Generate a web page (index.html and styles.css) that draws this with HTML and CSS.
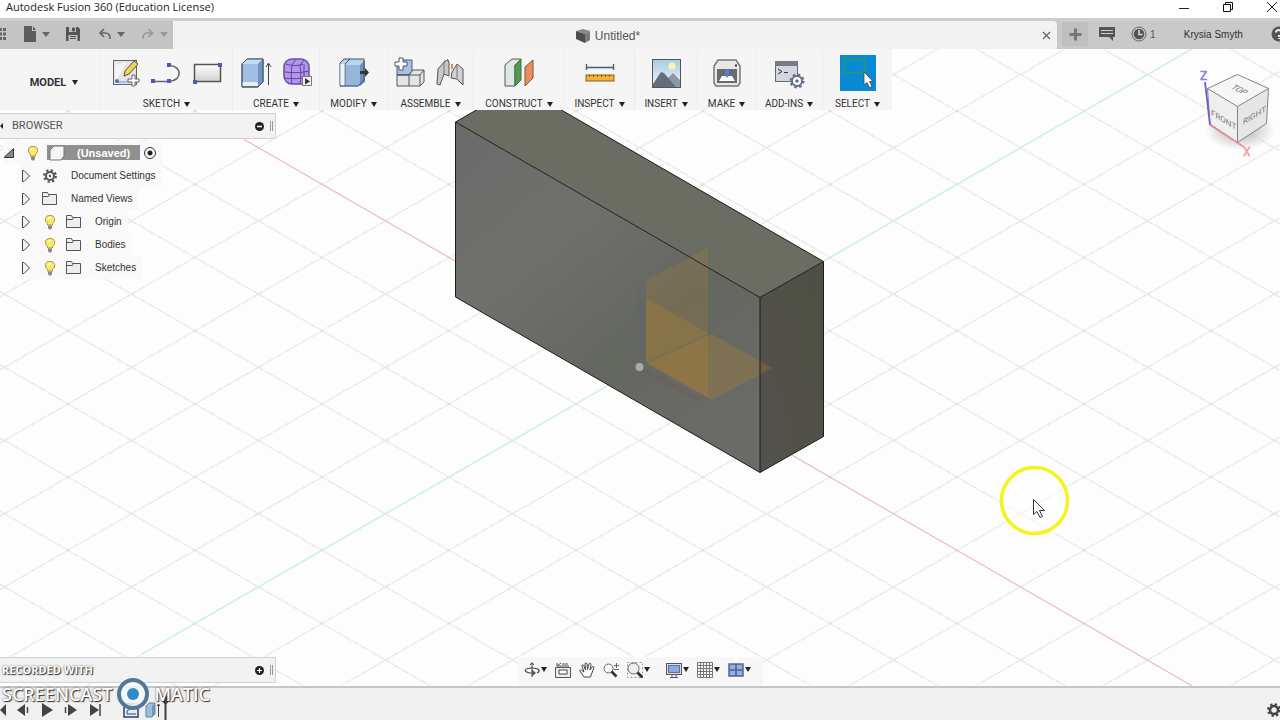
FILE: index.html
```html
<!DOCTYPE html>
<html lang="en">
<head>
<meta charset="utf-8">
<title>Autodesk Fusion 360 (Education License)</title>
<link rel="stylesheet" href="styles.css">
</head>
<body>
<header class="titlebar">
  <h1 class="app-title">Autodesk Fusion 360 (Education License)</h1>
  <div class="window-controls">
    <button class="plain" aria-label="Minimize"><svg width="12" height="12"><path d="M1 7.500h10" stroke="#222" fill="none"/></svg></button>
    <button class="plain" aria-label="Restore"><svg width="12" height="12"><path d="M1.500 3.500h7v7h-7zM3.500 3.500v-2h7v7h-2" stroke="#111" fill="none"/></svg></button>
    <button class="plain" aria-label="Close"><svg width="12" height="12"><path d="M1 1l10 10M11 1L1 11" stroke="#222" fill="none"/></svg></button>
  </div>
</header>

<div class="tabbar">
  <div class="quick">
    <button class="plain" aria-label="Data panel"><svg width="7" height="14" fill="#666"><path d="M0 1h2v3H0zM3 1h3v3H3zM0 5.500h2v3H0zM3 5.500h3v3H3zM0 10h2v3H0zM3 10h3v3H3z"/></svg></button>
    <button class="plain pair" aria-label="File"><svg width="14" height="16" fill="#5c5c5c"><path d="M1 0h8v5h4v11H1zM10 0l3 4h-3z"/></svg><span class="caret soft"></span></button>
    <button class="plain" aria-label="Save"><svg width="14" height="14"><path d="M0 0h12l2 2v12H0z" fill="#555"/><path d="M3 0h7v5H3zM2.500 8h9v6h-9z" fill="#c4c4c4"/><path d="M6.500 1h2v3h-2zM4 9.500h6M4 11.500h6" stroke="#555" fill="#555"/></svg></button>
    <button class="plain pair" aria-label="Undo"><svg width="16" height="14"><path d="M8 2L4 6l4 4M4.500 6H9c4 0 5.500 2.500 5 6" stroke="#666" stroke-width="1.700" fill="none"/></svg><span class="caret soft"></span></button>
    <button class="plain pair" aria-label="Redo"><svg width="14" height="14"><path d="M7.500 2l4 4-4 4M11 6H7c-4 0-5.500 2.500-5 6" stroke="#999" stroke-width="1.700" fill="none"/></svg><span class="caret faint"></span></button>
  </div>
  <div class="tab">
    <div class="tab-title">
      <svg width="16" height="16"><path d="M1 3l7-2 7 2-5 3z" fill="#888"/><path d="M1 3l9 3v9l-9-4z" fill="#4d4d4d"/><path d="M10 6l5-3v9l-5 3z" fill="#7a7a7a"/></svg>
      <span>Untitled*</span>
    </div>
    <button class="plain" aria-label="Close tab"><svg width="9" height="9"><path d="M1 1l7 7M8 1L1 8" stroke="#666" stroke-width="1.300"/></svg></button>
  </div>
  <div class="account">
    <button class="new-tab" aria-label="New tab"><svg width="13" height="13"><path d="M6.500 0.500v12M0.500 6.500h12" stroke="#777" stroke-width="3"/></svg></button>
    <button class="plain" aria-label="Comments"><svg width="16" height="14"><path d="M0 0h16v10h-2v4l-4-4H0z" fill="#555"/><path d="M2 3.500h12M2 6.500h12" stroke="#ccc"/></svg></button>
    <button class="plain jobs" aria-label="Job status, 1"><svg width="16" height="16"><circle cx="8" cy="8" r="7" fill="none" stroke="#666"/><circle cx="8" cy="8" r="5.300" fill="#555"/><path d="M8 4v4.500h3.500" stroke="#ddd" stroke-width="1.500" fill="none"/></svg><span>1</span></button>
    <button class="plain user">Krysia Smyth</button>
    <button class="plain help" aria-label="Help"><svg width="9" height="16"><circle cx="8" cy="8" r="7.500" fill="#555"/><path d="M5 6.500c0-3 4-3 5-1" stroke="#eee" stroke-width="2" fill="none"/><path d="M8 9v2M8 12v1" stroke="#eee" stroke-width="2"/></svg></button>
  </div>
</div>

<main class="viewport">
  <svg class="scene" viewBox="0 49 1280 637" preserveAspectRatio="xMidYMid slice" role="img" aria-label="Model of a rectangular block on a grid">
    <defs>
      <pattern id="grid" x="639.5" y="367.3" width="127" height="73.2" patternUnits="userSpaceOnUse">
        <path d="M0 0L127 73.200M0 73.200L127 0" stroke="#cfcfcf" stroke-width="0.8" stroke-dasharray="6 1 2 1" fill="none"/>
      </pattern>
      <linearGradient id="front" x1="0" y1="0" x2="0.7" y2="1">
        <stop offset="0" stop-color="#696a6b"/><stop offset="0.35" stop-color="#70716c"/><stop offset="0.7" stop-color="#646660"/><stop offset="1" stop-color="#6a6b66"/>
      </linearGradient>
      <linearGradient id="side" x1="1" y1="0" x2="0" y2="1">
        <stop offset="0" stop-color="#4e4f44"/><stop offset="1" stop-color="#53524c"/>
      </linearGradient>
    </defs>
    <rect x="-600" y="-400" width="2500" height="1500" fill="#fdfdfd"/>
    <rect x="-600" y="-400" width="2500" height="1500" fill="url(#grid)"/>
    <path d="M142 654L1192 49" stroke="#c6f5da" stroke-width="1.200"/>
    <path d="M244 139.300L1192 685.800" stroke="#f5afb7" stroke-width="1"/>
    <path d="M455.500 122L519 85.500 823.500 261.500 760 297.500z" fill="#6c6d62"/>
    <path d="M455.500 122L760 297.500V472.500L455.500 297z" fill="url(#front)"/>
    <path d="M760 297.500L823.500 261.500V436.500L760 472.500z" fill="url(#side)"/>
    <g fill="#b8862a">
      <path d="M646 280L708 248V333L646 362z" opacity="0.2"/>
      <path d="M646 298L708 333V397L646 362z" opacity="0.28"/>
      <path d="M646 364L712 334 772 368 712 400z" opacity="0.28"/>
    </g>
    <path d="M640 288V360" stroke="#5c5f86" stroke-width="4" opacity="0.200"/>
    <path d="M644 370L700 400" stroke="#76424f" stroke-width="4" opacity="0.150"/>
    <circle cx="639.500" cy="367" r="4" fill="#aaaca8"/>
    <path d="M519 85.500L823.500 261.500V436.500L760 472.500 455.500 297V122zM455.500 122L760 297.500 823.500 261.500M760 297.500V472.500" fill="none" stroke="#1c1c1a" stroke-width="1"/>
    <circle cx="1034.500" cy="500.500" r="33" fill="#fff" fill-opacity="0.500" stroke="#f7f21c" stroke-width="3.500"/>
    <path d="M1033.500 499.500v15l3.500-3 3 6 2.500-1-3-6h5z" fill="#fff" stroke="#333"/>
  </svg>

  <svg class="viewcube" viewBox="1190 65 90 100" width="90" height="100" role="img" aria-label="View cube">
    <defs><radialGradient id="cubeshade"><stop offset="0.400" stop-color="#bbb" stop-opacity="0.700"/><stop offset="1" stop-color="#bbb" stop-opacity="0"/></radialGradient></defs>
    <ellipse cx="1240" cy="130" rx="35" ry="20" fill="url(#cubeshade)"/>
    <path d="M1237.500 74.500L1268.500 88.500 1237.500 106.500 1207.500 88.500z" fill="#f6f6f6"/>
    <path d="M1207.500 88.500L1237.500 106.500V142.500L1210 124z" fill="#efefef"/>
    <path d="M1268.500 88.500L1237.500 106.500V142.500L1266.500 123.500z" fill="#e6e6e6"/>
    <path d="M1237.500 74.500L1268.500 88.500 1237.500 106.500 1207.500 88.500zM1207.500 88.500L1210 124 1237.500 142.500 1266.500 123.500 1268.500 88.500M1237.500 106.500V142.500" fill="none" stroke="#777" stroke-width="0.900"/>
    <path d="M1205 82L1210 125" stroke="#6a5fd0" stroke-width="1.800"/>
    <path d="M1210 125L1244 147" stroke="#eb8c9c" stroke-width="1.500"/>
    <g class="cube-text">
      <text transform="translate(1230 88) rotate(27) skewX(-30)">TOP</text>
      <text transform="translate(1211 115) skewY(31)">FRONT</text>
      <text transform="translate(1243 125) skewY(-31)">RIGHT</text>
    </g>
    <text class="axis z" x="1200" y="80">Z</text>
    <text class="axis x" x="1243" y="156">X</text>
  </svg>

  <nav class="toolbar" aria-label="Tools">
    <div class="group model"><button class="menu strong">MODEL <span class="caret"></span></button></div>
    <div class="group">
      <div class="icons">
        <button class="tool" aria-label="Create sketch"><svg width="32" height="32"><rect x="3.500" y="3.500" width="23" height="24" fill="#e3e4e6" stroke="#666"/><path d="M5 26V8l12-3z" fill="#fff" opacity="0.600"/><path d="M15 14l9-10 4 3-9 10-5 2z" fill="#f0d45c" stroke="#5d5233"/><path d="M7 25h15" stroke="#7894c6"/><circle cx="7" cy="24" r="2" fill="#4b6fc2"/><path d="M22 18h3v4h4v3h-4v4h-3v-4h-4v-3h4z" fill="#fff" stroke="#666"/></svg></button>
        <button class="tool" aria-label="Line"><svg width="32" height="32"><path d="M2 24.500h16c14-1 13-16 0-16" fill="none" stroke="#666" stroke-width="1.600"/><g fill="#4a57c8"><rect x="0" y="22" width="4" height="4"/><rect x="16" y="22" width="4" height="4"/><rect x="16" y="6" width="4" height="4"/></g></svg></button>
        <button class="tool" aria-label="Rectangle"><svg width="32" height="32"><defs><linearGradient id="gr" x2="0" y2="1"><stop stop-color="#fff"/><stop offset="1" stop-color="#d0d0d2"/></linearGradient></defs><rect x="2.500" y="7.500" width="26" height="17" fill="url(#gr)" stroke="#555" stroke-width="1.500"/><g fill="#4a57c8"><rect x="1" y="23" width="4" height="4"/><rect x="26" y="6" width="4" height="4"/></g></svg></button>
      </div>
      <button class="menu">SKETCH <span class="caret"></span></button>
    </div>
    <div class="group">
      <div class="icons">
        <button class="tool" aria-label="Extrude"><svg width="32" height="32"><path d="M2 7l5-5h16v23l-5 5H2z" fill="#9fc0e4" stroke="#53667d"/><path d="M2 7l5-5h16l-5 5z" fill="#c5dbf2"/><path d="M18 7l5-5v23l-5 5z" fill="#6e95c0"/><path d="M2 25h16v4H2z" fill="#e9eef3"/><path d="M2 7l5-5h16v23l-5 5H2z" fill="none" stroke="#3f4f60"/><path d="M28.500 28V7M26 10l2.500-4 2.500 4" fill="none" stroke="#444"/></svg></button>
        <button class="tool" aria-label="Create form"><svg width="32" height="32"><rect x="3" y="2" width="25" height="25" rx="8" fill="#b398ea" stroke="#6a4fa5" stroke-width="1.500"/><path d="M11 8c-1 6-1 13 0 19M19 8c1 6 1 13 0 19M4 15c8 1 16 1 24-1M3 21c8 1 17 1 25-1M5 7c6 2 12 2 17 0M11 8l4-6M19 8l4-5M23 7v19" fill="none" stroke="#6240a8"/><path d="M21.500 19.500h9v9h-9z" fill="#f4f4f4" stroke="#777"/><path d="M24 21l5 3.500-5 3z" fill="#333"/></svg></button>
      </div>
      <button class="menu">CREATE <span class="caret"></span></button>
    </div>
    <div class="group">
      <div class="icons"><button class="tool" aria-label="Press pull"><svg width="32" height="32"><path d="M2 6l4-4h18l3 3v19l-7 6H2z" fill="#bcd3ec"/><path d="M8 8h14v21H8z" fill="#96b5dc"/><path d="M22 8l5-5v22l-5 4z" fill="#6d90bf"/><path d="M2 6l4-4h20v21l-6 6H2zM7 29V7l5-5" fill="none" stroke="#3f5066"/><path d="M2.500 7h4v21h-4z" fill="#f1f4f7"/><path d="M22 14h5v-3l4 4.500-4 4.500v-3h-5z" fill="#333"/></svg></button></div>
      <button class="menu">MODIFY <span class="caret"></span></button>
    </div>
    <div class="group">
      <div class="icons">
        <button class="tool" aria-label="New component"><svg width="32" height="32"><path d="M3 8l4-5h11v11l-3 4H3z" fill="#a9c0e6" stroke="#445d86"/><path d="M15 18l4-5h11v12l-4 4H3V18z" fill="#e4e5e7" stroke="#555"/><path d="M3 18h23v11M15 18v11M26 18l4-5" fill="none" stroke="#555"/><path d="M5 1h4v4h4v4H9v4H5V9H1V5h4z" fill="#fff" stroke="#555"/></svg></button>
        <button class="tool" aria-label="Joint"><svg width="32" height="32"><path d="M3 12l7-8 3-1 1 3v13l-5-2-4 11-3-1z" fill="#c6c9cc" stroke="#555"/><path d="M9 17V6l4-4" fill="none" stroke="#777"/><path d="M17 15l5-8 6 5v16l-6-6-6-1z" fill="#cfd1d3" stroke="#555"/><path d="M22 7v14" stroke="#777"/><path d="M17 12V7" stroke="#e78637" stroke-width="2"/></svg></button>
      </div>
      <button class="menu">ASSEMBLE <span class="caret"></span></button>
    </div>
    <div class="group">
      <div class="icons"><button class="tool" aria-label="Offset plane"><svg width="32" height="32"><path d="M2 8l7-6h9l-6 6v21H2z" fill="#dfe5e3" stroke="#555"/><path d="M12 8l6-6v21l-6 6z" fill="#4f9a51" stroke="#3f6e40"/><path d="M22 10l8-7v18l-8 8z" fill="#ec8e58" stroke="#7d5239"/></svg></button></div>
      <button class="menu">CONSTRUCT <span class="caret"></span></button>
    </div>
    <div class="group">
      <div class="icons"><button class="tool" aria-label="Measure"><svg width="32" height="32"><path d="M2.500 7v6M29.500 7v6M3 10.500h26" stroke="#4e586c" stroke-width="1.300"/><rect x="2" y="18" width="28" height="6" fill="#f5b52d" stroke="#80601f"/><path d="M5.500 18v2M9.500 18v2M13.500 18v2M17.500 18v2M21.500 18v2M25.500 18v2" stroke="#7b5c19"/></svg></button></div>
      <button class="menu">INSPECT <span class="caret"></span></button>
    </div>
    <div class="group">
      <div class="icons"><button class="tool" aria-label="Insert image"><svg width="32" height="32"><defs><linearGradient id="sky" x2="0" y2="1"><stop stop-color="#a6cce4"/><stop offset="1" stop-color="#f2f7fa"/></linearGradient></defs><rect x="2.500" y="2.500" width="28" height="28" fill="url(#sky)" stroke="#555"/><circle cx="22" cy="9" r="3.500" fill="#fdf6a8"/><path d="M14 25l9-9 7 7v7H14z" fill="#8e98a0"/><path d="M3 27l8-12 3 1 12 14H3z" fill="#656f7b"/></svg></button></div>
      <button class="menu">INSERT <span class="caret"></span></button>
    </div>
    <div class="group">
      <div class="icons"><button class="tool" aria-label="3D print"><svg width="32" height="32"><path d="M3 9l4-6h18l4 6v17l-2 3H5l-2-3z" fill="#e8e8e9" stroke="#777" stroke-width="1.500"/><path d="M6 12h20v14H6z" fill="#676c73"/><path d="M8 24l3-5h10l3 5z" fill="#fff"/><path d="M14 13h4v5l-2 3-2-3z" fill="#5b7fd0"/><path d="M24 8.500h2" stroke="#333" stroke-width="2"/></svg></button></div>
      <button class="menu">MAKE <span class="caret"></span></button>
    </div>
    <div class="group">
      <div class="icons"><button class="tool" aria-label="Scripts and add-ins"><svg width="32" height="32"><rect x="2.500" y="4.500" width="22" height="20" fill="#d5d7df" stroke="#646a76"/><path d="M2 4h23v5H2z" fill="#777c87"/><path d="M5 12l4 2.500L5 17M11 15.500h4" fill="none" stroke="#333"/><circle cx="24" cy="24" r="5" fill="#fff" stroke="#63708a" stroke-width="2"/><circle cx="24" cy="24" r="6.500" fill="none" stroke="#63708a" stroke-width="2" stroke-dasharray="2.500 2.600"/><circle cx="24" cy="24" r="1.800" fill="#63708a"/></svg></button></div>
      <button class="menu">ADD-INS <span class="caret"></span></button>
    </div>
    <div class="group">
      <div class="icons"><button class="tool active" aria-label="Select"><svg width="36" height="36"><rect x="4.500" y="4.500" width="20" height="13" fill="none" stroke="#2d9a5b" stroke-width="1.500"/><path d="M24 17v13l3-2.500 2.500 5 2.500-1-2.500-5H33z" fill="#fff" stroke="#444" stroke-width="0.800"/></svg></button></div>
      <button class="menu">SELECT <span class="caret"></span></button>
    </div>
  </nav>

  <section class="browser" aria-label="Browser">
    <header class="panel">
      <span class="panel-arrow"></span>
      <h2>BROWSER</h2>
      <button class="plain" aria-label="Collapse browser"><svg width="9" height="9"><circle cx="4.500" cy="4.500" r="4.500" fill="#222"/><path d="M2 4.500h5" stroke="#fff" stroke-width="1.500"/></svg></button>
      <span class="grip"></span>
    </header>
    <ul class="tree">
      <li class="row root">
        <svg width="12" height="12"><path d="M1 10.500L10.500 1.500v9z" fill="#888" stroke="#333"/></svg>
        <svg class="bulb" width="14" height="16"><use href="#bulb"/></svg>
        <span class="component"><svg width="16" height="16"><path d="M1 5l4-4h10v10l-3 4H1z" fill="#f4f4f4" stroke="#777"/></svg><b>(Unsaved)</b></span>
        <input type="radio" class="activate" checked aria-label="Activate (Unsaved)">
      </li>
      <li class="row"><svg width="10" height="14"><use href="#twist"/></svg>
        <svg class="wide" width="16" height="16"><circle cx="8" cy="8" r="4" fill="none" stroke="#555" stroke-width="2"/><circle cx="8" cy="8" r="5.800" fill="none" stroke="#555" stroke-width="2.200" stroke-dasharray="2.300 2.250"/><circle cx="8" cy="8" r="1.200" fill="#555"/></svg>
        <span>Document Settings</span></li>
      <li class="row"><svg width="10" height="14"><use href="#twist"/></svg><svg class="wide" width="16" height="16"><use href="#folder"/></svg><span>Named Views</span></li>
      <li class="row"><svg width="10" height="14"><use href="#twist"/></svg><svg class="wide" width="16" height="16"><use href="#bulb"/></svg><svg width="16" height="16"><use href="#folder"/></svg><span>Origin</span></li>
      <li class="row"><svg width="10" height="14"><use href="#twist"/></svg><svg class="wide" width="16" height="16"><use href="#bulb"/></svg><svg width="16" height="16"><use href="#folder"/></svg><span>Bodies</span></li>
      <li class="row"><svg width="10" height="14"><use href="#twist"/></svg><svg class="wide" width="16" height="16"><use href="#bulb"/></svg><svg width="16" height="16"><use href="#folder"/></svg><span>Sketches</span></li>
    </ul>
  </section>

  <div class="bottom">
    <div class="panel comments">
      <button class="plain" aria-label="Expand comments"><svg width="9" height="9"><circle cx="4.500" cy="4.500" r="4.500" fill="#222"/><path d="M2 4.500h5M4.500 2v5" stroke="#fff" stroke-width="1.200"/></svg></button>
      <span class="grip"></span>
    </div>
    <nav class="navbar" aria-label="Navigation">
      <button class="plain nav" aria-label="Orbit"><svg width="16" height="16"><path d="M8 1v14M6 3l2-2.500L10 3" stroke="#444" fill="none"/><path d="M13 11c4-2 2-5-5-5-8 0-9 4-2 5h4M8 8.500l3 2.500-3 2.500" stroke="#444" stroke-width="1.200" fill="none"/></svg><span class="caret"></span></button>
      <button class="plain nav" aria-label="Look at"><svg width="16" height="16"><path d="M.5 5.500h15v10H.5z" fill="#eee" stroke="#555"/><rect x="4" y="8" width="8" height="4" fill="#fff" stroke="#444"/><path d="M2 4l4-3M2 1v3h12M7 2h6" stroke="#555" fill="none"/></svg></button>
      <button class="plain nav" aria-label="Pan"><svg width="16" height="16"><path d="M5 15L1 9c-.5-1 1-2 2-.5L5 10 3 4c0-1.500 1.500-1.500 2 0l1.500 4L6 2c0-1.500 2-1.500 2 0l.5 5.500L10 2c.500-1.300 2-1 2 .5L11 8l2-3c1-1 2.300-.3 1.800 1L12.500 12l-1 3z" fill="#fff" stroke="#444"/></svg></button>
      <button class="plain nav" aria-label="Zoom"><svg width="16" height="16"><circle cx="5.500" cy="6.500" r="4.500" fill="#f8f8f8" stroke="#666"/><path d="M8.500 9.500l5 5" stroke="#333" stroke-width="2.500"/><path d="M11 3.500h5M13.500 1v5M11 7.500h5" stroke="#666"/></svg></button>
      <button class="plain nav fit" aria-label="Fit"><svg width="16" height="16"><path d="M.5.500h15v15H.5z" fill="none" stroke="#999" stroke-dasharray="2 2"/><circle cx="6.500" cy="6.500" r="5.500" fill="#eee" stroke="#666"/><path d="M10.500 10.500l5 5" stroke="#333" stroke-width="2.800"/></svg><span class="caret"></span></button>
      <button class="plain nav" aria-label="Display settings"><svg width="16" height="16"><rect x=".5" y="1.500" width="15" height="11" fill="#ddd" stroke="#555"/><rect x="2.500" y="3.500" width="11" height="7" fill="#8caae0" stroke="#5373aa"/><path d="M4 15.500h8M6 13v2M10 13v2" stroke="#555"/></svg><span class="caret"></span></button>
      <button class="plain nav" aria-label="Grid and snaps"><svg width="16" height="16"><path d="M.5.500h15v15H.5zM3.500 0v16M6.500 0v16M9.500 0v16M12.500 0v16M0 3.500h16M0 6.500h16M0 9.500h16M0 12.500h16" fill="none" stroke="#777"/></svg><span class="caret"></span></button>
      <button class="plain nav" aria-label="Viewports"><svg width="16" height="16"><path d="M1 2h14v12H1z" fill="#91afe2"/><path d="M1 2h14v12H1zM8 2v12M1 8h14" fill="none" stroke="#4d6595" stroke-width="1.500"/></svg><span class="caret"></span></button>
    </nav>
  </div>
</main>

<footer class="timeline">
  <div class="playback">
    <button class="plain" aria-label="Go to start"><svg width="6" height="14"><path d="M6 1v12L0 7z" fill="#444"/></svg></button>
    <button class="plain" aria-label="Step back"><svg width="14" height="14"><path d="M9 1v12L1 7z" fill="#444"/><path d="M11.500 4v6" stroke="#444" stroke-width="1.500"/></svg></button>
    <button class="plain" aria-label="Play"><svg width="14" height="14"><path d="M2 0v14l11-7z" fill="#444"/></svg></button>
    <button class="plain" aria-label="Step forward"><svg width="14" height="14"><path d="M4 1v12l9-6z" fill="#444"/><path d="M1.500 4v6" stroke="#444" stroke-width="1.500"/></svg></button>
    <button class="plain" aria-label="Go to end"><svg width="14" height="14"><path d="M2 1v12l9-6z" fill="#444"/><path d="M12 1v12" stroke="#444" stroke-width="1.500"/></svg></button>
  </div>
  <div class="features">
    <button class="plain" aria-label="Sketch feature"><svg width="16" height="16"><path d="M1 2h14v13H1z" fill="#e8edf5" stroke="#2e4368" stroke-width="1.500"/><path d="M4 12V9l8-5M4 12h9" stroke="#2e4368" fill="none"/><path d="M9 3l5-3 2 1-5 4z" fill="#f0d62b"/></svg></button>
    <button class="plain" aria-label="Extrude feature"><svg width="16" height="16"><path d="M1 4l3-3h6v11l-3 3H1z" fill="#9dbddf" stroke="#66809c"/><path d="M7 4l3-3v11l-3 3z" fill="#7294b9"/><path d="M13.500 15V2M12 4l1.500-2L15 4" stroke="#444" fill="none"/></svg></button>
    <svg class="marker" width="9" height="24"><path d="M0 0h9v4L5.500 8V24h-2V8L0 4z" fill="#3c3c3c"/></svg>
  </div>
  <button class="plain settings" aria-label="Timeline settings"><svg width="13" height="16"><circle cx="7" cy="8" r="4" fill="none" stroke="#444" stroke-width="2.500"/><circle cx="7" cy="8" r="5.800" fill="none" stroke="#444" stroke-width="2.200" stroke-dasharray="2.300 2.250"/></svg></button>
  <div class="watermark">
    <div class="recorded">RECORDED WITH</div>
    <div class="brand"><span>SCREENCAST</span><svg width="34" height="34"><circle cx="17" cy="17" r="14" fill="#f7f9fa" fill-opacity="0.800" stroke="#50789a" stroke-width="4"/><circle cx="17" cy="17" r="6" fill="#348bc4"/></svg><span>MATIC</span></div>
  </div>
</footer>

<svg class="symbols" width="0" height="0" aria-hidden="true">
  <symbol id="twist" viewBox="0 0 10 14" width="10" height="14"><path d="M1.500 1.500v11h1.500l5.500-5.500L3 1.500z" fill="#f2f2f2" stroke="#444"/></symbol>
  <symbol id="bulb" viewBox="0 0 16 16" width="16" height="16"><path d="M8 1.500c-6 0-5.500 5.500-2.500 8V11h5V9.500c3-2.500 3.500-8-2.500-8z" fill="#f6ea69" stroke="#a8973b"/><path d="M6 11.500h4V14l-1 1.500H7L6 14z" fill="#888"/><path d="M6 4.500c1-1 2-1 3-1" stroke="#fffde0" stroke-width="1.500" fill="none"/></symbol>
  <symbol id="folder" viewBox="0 0 16 16" width="16" height="16"><path d="M.5 13.500v-12h5l1 2h8v10zM.5 5.500h6l1-2" fill="#eee" stroke="#555"/></symbol>
</svg>
</body>
</html>
```

FILE: styles.css
```css
* { box-sizing: border-box; }

body {
  margin: 0;
  min-height: 100vh;
  display: flex;
  flex-direction: column;
  overflow: hidden;
  background: #f0f0f0;
  color: #333;
  font-family: "Liberation Sans", Arial, sans-serif;
  font-size: 10px;
}

svg { display: block; flex: none; }

button { font: inherit; color: inherit; cursor: pointer; }

.plain {
  display: flex;
  align-items: center;
  padding: 0;
  border: 0;
  background: none;
}

.caret {
  display: inline-block;
  flex: none;
  border: 3px solid transparent;
  border-top: 5px solid #222;
  border-bottom: 0;
}
.caret.soft, .caret.faint { border-width: 5px 4px 0; }
.caret.soft { border-top-color: #666; }
.caret.faint { border-top-color: #999; }

/* Window title */
.titlebar {
  display: flex;
  justify-content: space-between;
  height: 21px;
  padding: 0 2px 4px 6px;
  background: #fff;
  border-bottom: 3px solid #cecece;
}
.app-title {
  margin: 0;
  color: #222;
  font: 11px/14px "Open Sans", "Noto Sans", sans-serif;
}
.window-controls { display: flex; gap: 32px; }

/* Document tabs */
.tabbar {
  display: flex;
  height: 28px;
  background: #c9c9c9;
}
.quick {
  display: flex;
  align-items: center;
  gap: 16px;
  width: 173px;
  padding-bottom: 2px;
  background: #c4c4c4;
}
.pair { gap: 5px; }
.tab {
  display: flex;
  flex: 1;
  align-items: center;
  padding-right: 6px;
  background: #f2f2f3;
  border-radius: 0 4px 0 0;
}
.tab-title {
  display: flex;
  flex: 1;
  align-items: center;
  justify-content: center;
  gap: 4px;
  padding-top: 2px;
  color: #555;
  font-size: 12px;
}
.account {
  display: flex;
  align-items: center;
  width: 223px;
  padding: 0 0 2px 5px;
}
.new-tab {
  display: flex;
  align-items: center;
  justify-content: center;
  width: 26px;
  height: 24px;
  margin-right: 11px;
  padding: 0;
  border: 0;
  background: #bfbfbf;
}
.jobs { gap: 3px; margin-left: 16px; color: #555; }
.user { margin: 0 auto; }

/* Canvas */
.viewport {
  position: relative;
  display: flex;
  flex: 1;
  flex-direction: column;
  align-items: flex-start;
  overflow: hidden;
  background: #fdfdfd;
}
.scene {
  position: absolute;
  inset: 0;
  width: 100%;
  height: 100%;
}
.viewcube { position: absolute; top: 16px; right: 0; }
.cube-text { fill: #777; font: 8px Roboto, sans-serif; }
.axis { font: 12px Roboto, sans-serif; }
.axis.z { fill: #8583e2; stroke: #8583e2; stroke-width: 0.5; }
.axis.x { fill: #f09aa8; stroke: #f09aa8; stroke-width: 0.5; }

/* Toolbar */
.toolbar {
  position: relative;
  display: grid;
  grid-template-columns: 100px 132px 87px 68px 86px 91px 70px 63px 58px 67px 70px;
  height: 61px;
  background: #f5f5f6;
}
.group {
  display: flex;
  flex-direction: column;
  align-items: center;
  justify-content: space-between;
  padding: 6px 0 0;
}
.group + .group { border-left: 1px solid #ececed; }
.model { justify-content: center; padding: 6px 0 0 8px; }
.icons { display: flex; gap: 9px; }
.tool {
  display: flex;
  align-items: center;
  justify-content: center;
  width: 32px;
  height: 36px;
  padding: 0;
  border: 0;
  background: none;
}
.tool.active { width: 36px; background: #0a8ad6; }
.menu {
  display: flex;
  align-items: center;
  gap: 4px;
  padding: 0;
  border: 0;
  background: none;
  color: #333;
  font: 10px/12px Roboto, sans-serif;
}
.menu.strong { gap: 6px; font-size: 11px; font-weight: 700; }

/* Browser tree */
.browser { position: relative; width: 276px; padding-top: 3px; }
.panel {
  display: flex;
  align-items: center;
  width: 276px;
  height: 26px;
  padding-right: 2px;
  background: #f2f2f2;
  border: 1px solid #d2d2d2;
  border-left: 0;
}
.panel-arrow {
  border: 3px solid transparent;
  border-right-color: #222;
  border-left: 0;
}
.panel h2 {
  flex: 1;
  margin: 0 0 0 9px;
  color: #555;
  font: 11px/14px Roboto, sans-serif;
}
.grip {
  width: 3px;
  height: 10px;
  margin-left: 6px;
  border: solid #999;
  border-width: 0 1px;
}
.tree { margin: 0; padding: 2px 0 0; list-style: none; }
.row {
  display: flex;
  align-items: center;
  gap: 8px;
  width: fit-content;
  height: 23px;
  margin-left: 21px;
  padding-right: 6px;
  background: #f9f9f9;
}
.row .wide { margin-left: 3px; }
.row span { margin-left: 5px; }
.row.root { margin-left: 3px; }
.root .bulb { margin-left: 2px; }
.root .component {
  display: flex;
  align-items: center;
  gap: 12px;
  width: 93px;
  height: 15px;
  margin: 0;
  padding-left: 2px;
  background: #909090;
  color: #fff;
  font-size: 11px;
}
.activate {
  appearance: none;
  width: 12px;
  height: 12px;
  margin: 0 0 0 -4px;
  border: 1px solid #333;
  border-radius: 50%;
  background: radial-gradient(#222 2px, #fff 3px);
}

/* Bottom of canvas */
.bottom {
  position: relative;
  display: grid;
  grid-template-columns: 1fr auto 1fr;
  width: 100%;
  margin-top: auto;
}
.comments { justify-content: flex-end; margin-bottom: 3px; }
.navbar {
  display: flex;
  align-items: center;
  gap: 8px;
  padding: 0 12px 4px 6px;
  background: #f7f7f7;
}
.nav { gap: 1px; }
.fit { margin-right: 8px; }

/* Timeline */
.timeline {
  position: relative;
  display: flex;
  align-items: flex-end;
  height: 34px;
  background: #f0f0f0;
  border-top: 2px solid #c6c6c6;
}
.playback { display: flex; gap: 10px; padding-bottom: 3px; }
.features { display: flex; align-items: flex-end; gap: 6px; margin-left: 21px; }
.features button { padding-bottom: 2px; }
.marker { margin-left: -6px; }
.settings { margin: 0 0 2px auto; }
.watermark {
  position: absolute;
  bottom: 9px;
  left: 2px;
  color: #fff;
  font-family: "Open Sans", "Noto Sans", sans-serif;
  font-weight: 700;
  text-shadow: 1px 1px 1px #333, 0 0 2px #555;
  pointer-events: none;
}
.recorded { font-size: 11px; line-height: 14px; }
.brand {
  display: flex;
  align-items: center;
  gap: 4px;
  font-size: 18px;
  font-weight: 600;
  line-height: 20px;
}
.symbols { position: absolute; }
```
